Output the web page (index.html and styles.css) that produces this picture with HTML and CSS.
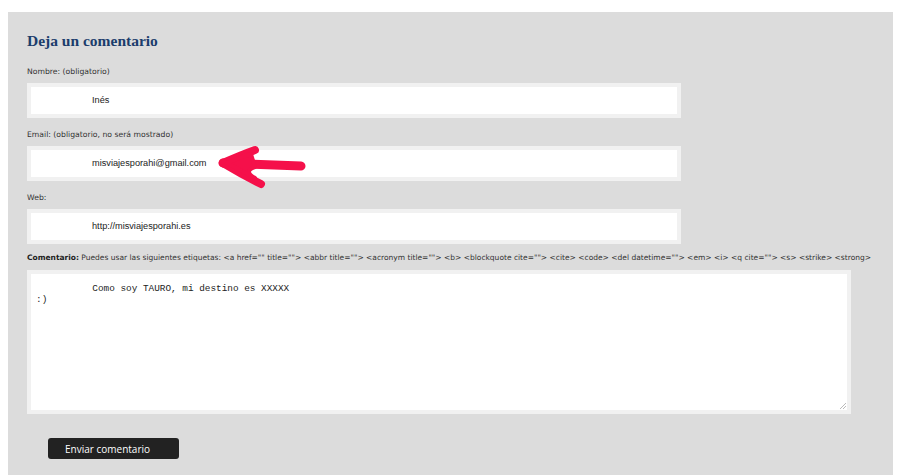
FILE: index.html
```html
<!DOCTYPE html>
<html lang="es">
<head>
<meta charset="utf-8">
<title>Deja un comentario</title>
<link rel="stylesheet" href="styles.css">
</head>
<body>
<div class="panel">
  <h3 class="title">Deja un comentario</h3>
  <form class="form">
    <div class="field">
      <label class="label">Nombre: (obligatorio)</label>
      <div class="input">Inés</div>
    </div>
    <div class="field field-email">
      <label class="label">Email: (obligatorio, no será mostrado)</label>
      <div class="input">misviajesporahi@gmail.com</div>
      <svg class="arrow" width="96" height="46" viewBox="0 0 96 46">
        <g fill="none" stroke="#f5104a" stroke-linecap="round" stroke-linejoin="round">
          <path d="M6 18 L84 21" stroke-width="9"/>
          <path d="M6 18 Q24 10 38 5" stroke-width="8"/>
          <path d="M6 18 Q26 30 44 39" stroke-width="8"/>
          <path d="M10 18 Q24 12 34 9 L38 22 Q26 26 38 33 Z" fill="#f5104a" stroke-width="4"/>
        </g>
      </svg>
    </div>
    <div class="field field-web">
      <label class="label">Web:</label>
      <div class="input">http://misviajesporahi.es</div>
    </div>
    <div class="field field-comment">
      <label class="label"><b>Comentario:</b> Puedes usar las siguientes etiquetas: &lt;a href="" title=""&gt; &lt;abbr title=""&gt; &lt;acronym title=""&gt; &lt;b&gt; &lt;blockquote cite=""&gt; &lt;cite&gt; &lt;code&gt; &lt;del datetime=""&gt; &lt;em&gt; &lt;i&gt; &lt;q cite=""&gt; &lt;s&gt; &lt;strike&gt; &lt;strong&gt;</label>
      <div class="textarea"><pre class="ta-text">          Como soy TAURO, mi destino es XXXXX
:)</pre><span class="grip"></span></div>
    </div>
    <button type="button" class="submit">Enviar comentario</button>
  </form>
</div>
</body>
</html>
```

FILE: styles.css
```css
html, body {
  margin: 0;
  padding: 0;
  background: #ffffff;
}

.panel {
  margin: 12px 7px 0 8px;
  background: #dcdcdc;
  padding: 20px 19px 16px 19px;
  box-sizing: border-box;
}

.title {
  margin: 0 0 17px 0;
  font-family: "Liberation Serif", "DejaVu Serif", serif;
  font-weight: bold;
  font-size: 15.5px;
  line-height: 18px;
  color: #1b3d6c;
  padding-top: 0;
}

.form {
  display: flex;
  flex-direction: column;
}

.field {
  position: relative;
  margin-bottom: 12px;
}

.label {
  display: block;
  font-family: "DejaVu Sans", Verdana, sans-serif;
  font-size: 7.7px;
  line-height: 10px;
  color: #333333;
  margin-bottom: 6px;
  white-space: nowrap;
}

.label b {
  color: #222222;
}

.input {
  width: 654px;
  height: 35px;
  box-sizing: border-box;
  border: 4px solid #f1f1f1;
  background: #ffffff;
  padding-left: 61px;
  font-family: "Liberation Sans", Arial, sans-serif;
  font-size: 9.2px;
  line-height: 27px;
  color: #222222;
}

.field-web {
  margin-bottom: 9px;
}

.field-comment {
  margin-bottom: 24px;
}

.field-comment .label {
  margin-bottom: 7px;
  font-size: 7.5px;
}

.textarea {
  position: relative;
  width: 824px;
  height: 144px;
  box-sizing: border-box;
  border: 4px solid #f1f1f1;
  background: #ffffff;
  padding: 9px 5px;
}

.ta-text {
  margin: 0;
  font-family: "Liberation Mono", "Courier New", monospace;
  font-size: 9.4px;
  line-height: 11px;
  color: #222222;
}

.grip {
  position: absolute;
  right: 1px;
  bottom: 1px;
  width: 6px;
  height: 6px;
  background: linear-gradient(135deg, transparent 45%, #bbbbbb 45%, #bbbbbb 55%, transparent 55%, transparent 70%, #bbbbbb 70%, #bbbbbb 80%, transparent 80%);
}

.arrow {
  position: absolute;
  left: 190px;
  top: 15px;
}

.submit {
  align-self: flex-start;
  margin-left: 21px;
  width: 131px;
  height: 21px;
  border: none;
  border-radius: 3px;
  background: #222222;
  color: #ffffff;
  font-family: "Open Sans", "DejaVu Sans", sans-serif;
  font-size: 10px;
  text-align: left;
  padding: 0 0 0 17px;
  cursor: pointer;
}
```
